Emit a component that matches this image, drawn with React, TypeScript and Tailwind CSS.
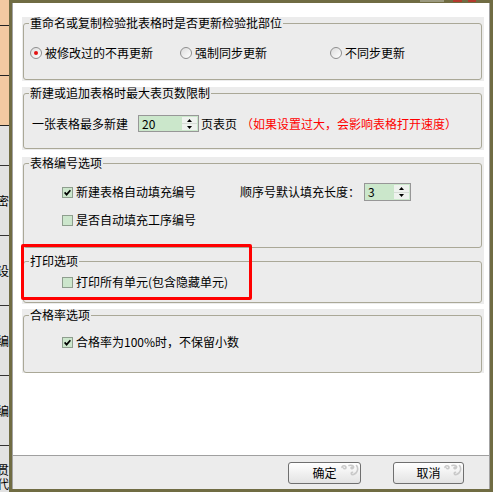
import React from 'react';

const Radio = ({ checked }: { checked?: boolean }) => (
  <span className="w-[12px] h-[12px] rounded-full border border-[#8e8e8e] bg-linear-to-br from-[#dcdcdc] to-white flex items-center justify-center shrink-0">
    {checked && <span className="w-[4px] h-[4px] rounded-full bg-[#e31212]" />}
  </span>
);

const Check = ({ checked }: { checked?: boolean }) => (
  <span className="w-[11px] h-[11px] border border-[#8e9e8e] bg-[#cce6cc] flex items-center justify-center shrink-0">
    {checked && (
      <svg width="7" height="7" viewBox="0 0 7 7">
        <path d="M0.6 3.4 L2.6 5.6 L6.4 1.2" stroke="#000" strokeWidth="1.7" fill="none" />
      </svg>
    )}
  </span>
);

const Spin = ({ value, size }: { value: string; size: string }) => (
  <div className={`flex border border-[#979797] bg-[#cbe7cb] ${size}`}>
    <span className="flex-1 pl-[3px] leading-[15px]">{value}</span>
    <div className="w-[15px] my-px mr-px flex flex-col bg-[#eef2ee]">
      <div className="flex-1 flex items-center justify-center border-b border-[#d6dcd6]">
        <svg width="5" height="3" viewBox="0 0 5 3"><path d="M2.5 0 L5 3 L0 3 Z" fill="#000" /></svg>
      </div>
      <div className="flex-1 flex items-center justify-center">
        <svg width="5" height="3" viewBox="0 0 5 3"><path d="M0 0 L5 0 L2.5 3 Z" fill="#000" /></svg>
      </div>
    </div>
  </div>
);

const Group = ({ title, panel, box, children }: { title: string; panel: string; box: string; children: React.ReactNode }) => (
  <div className={`ml-[9px] mr-[5px] bg-[#ececec] ${panel}`}>
    <fieldset className={`ml-px mr-[2px] border border-[#aaa897] rounded-[3px] ${box}`}>
      <legend className="ml-[5px] px-px leading-[12px]">{title}</legend>
      {children}
    </fieldset>
  </div>
);

// the little grey curl painted on the buttons
const Swirl = () => (
  <svg className="absolute right-[1px] top-[1px]" width="19" height="12" viewBox="0 0 19 12" fill="none" stroke="#c9c9c9" strokeWidth="1.6" strokeLinecap="round">
    <path d="M2 3.5 C2 1.2 6 1.2 6 3.5 C6 5 4 5.2 3.6 4" />
    <path d="M9 1.5 C13 0.5 15 3 12.5 4.5 C11 5.2 10.5 3.5 11.8 3.2" />
    <path d="M16.5 1.5 C18.5 4 18 9 13.5 10.5 C11 11 10.5 8.5 12.5 8.2" />
  </svg>
);

const Btn = ({ label, w }: { label: string; w: string }) => (
  <div className={`relative ${w} h-[22px] rounded-[3px] border border-[#6f6f6f] bg-linear-to-b from-white to-[#e3e3e3] flex items-center justify-center`}>
    <Swirl />
    <span className="relative">{label}</span>
  </div>
);

export default function App() {
  return (
    <div className="relative w-[493px] h-[492px] flex overflow-hidden text-[12px] text-black font-['Noto_Sans_CJK_SC','Liberation_Sans',sans-serif]">
      {/* strip of the window behind */}
      <div className="w-[9px] flex flex-col overflow-hidden">
        <div className="h-[26px] bg-[#f2c9a1] border-b border-[#222]" />
        <div className="h-[50px] bg-[#f2c9a1] border-b border-[#222]" />
        <div className="h-[50px] bg-[#f2c9a1] border-b border-[#222]" />
        <div className="h-[40px] bg-[#e2e2e2] border-b border-[#333]" />
        <div className="h-[70px] bg-[#e2e2e2] border-b border-[#333] flex items-center"><span className="-ml-[3px]">密</span></div>
        <div className="h-[70px] bg-[#e2e2e2] border-b border-[#333] flex items-center"><span className="-ml-[3px]">设</span></div>
        <div className="h-[70px] bg-[#e2e2e2] border-b border-[#333] flex items-center"><span className="-ml-[3px]">编</span></div>
        <div className="h-[70px] bg-[#e2e2e2] border-b border-[#333] flex items-center"><span className="-ml-[3px]">编</span></div>
        <div className="flex-1 bg-[#e2e2e2] flex flex-col pt-[17px] leading-[14px]">
          <span className="-ml-[3px]">贯</span>
          <span className="-ml-[3px]">代</span>
        </div>
      </div>

      {/* dialog */}
      <div className="flex-1 flex border-[3px] border-[#706c43]">
        <div className="flex-1 flex flex-col border-l border-r border-[#a3a3a3]">
          <div className="flex-1 bg-white pt-[14px]">
            <Group title="重命名或复制检验批表格时是否更新检验批部位" panel="h-[64px]" box="h-[63px]">
              <div className="mt-[16px] h-[16px] flex items-center pl-[6px]">
                <div className="w-[150px] flex items-center"><Radio checked /><span className="ml-[3px]">被修改过的不再更新</span></div>
                <div className="w-[150px] flex items-center"><Radio /><span className="ml-[3px]">强制同步更新</span></div>
                <div className="flex items-center"><Radio /><span className="ml-[3px]">不同步更新</span></div>
              </div>
            </Group>

            <Group title="新建或追加表格时最大表页数限制" panel="mt-[6px] h-[63px]" box="h-[62px]">
              <div className="mt-[16px] h-[17px] flex items-center pl-[8px]">
                <span>一张表格最多新建</span>
                <div className="ml-[10px]"><Spin value="20" size="w-[61px] h-[17px]" /></div>
                <span className="ml-[2px]">页表页</span>
                <span className="ml-[4px] text-[#ff0000]">（如果设置过大，会影响表格打开速度）</span>
              </div>
            </Group>

            <Group title="表格编号选项" panel="mt-[7px] h-[92px]" box="h-[91px]">
              <div className="mt-[14px] h-[18px] flex items-center pl-[38px]">
                <div className="w-[178px] flex items-center"><Check checked /><span className="ml-[3px]">新建表格自动填充编号</span></div>
                <span>顺序号默认填充长度：</span>
                <div className="ml-[4px]"><Spin value="3" size="w-[47px] h-[18px]" /></div>
              </div>
              <div className="mt-[10px] h-[18px] flex items-center pl-[38px]">
                <Check /><span className="ml-[3px]">是否自动填充工序编号</span>
              </div>
            </Group>

            <Group title="打印选项" panel="h-[55px] pt-[6px]" box="h-[48px]">
              <div className="mt-[7px] h-[16px] flex items-center pl-[38px]">
                <Check /><span className="ml-[3px]">打印所有单元(包含隐藏单元)</span>
              </div>
            </Group>

            <Group title="合格率选项" panel="mt-[5px] h-[64px]" box="h-[64px]">
              <div className="mt-[13px] h-[16px] flex items-center pl-[38px]">
                <Check checked /><span className="ml-[3px]">合格率为100%时，不保留小数</span>
              </div>
            </Group>
          </div>

          <div className="h-[34px] border-t border-[#a0a0a0] bg-[#ececec] flex justify-end gap-[32px] pt-[6px] pr-[25px]">
            <Btn label="确定" w="w-[73px]" />
            <Btn label="取消" w="w-[71px]" />
          </div>
        </div>
      </div>

      {/* bits of the title bar buttons above */}
      <div className="absolute top-0 left-[420px] w-[24px] h-[2px] bg-[#9c9a80]" />
      <div className="absolute top-0 left-[453px] w-[9px] h-[2px] bg-[#b33a2e]" />
      <div className="absolute top-0 left-[468px] w-[8px] h-[2px] bg-[#b33a2e]" />

      {/* red highlight drawn over the screenshot */}
      <div className="absolute left-[21px] top-[244px] w-[231px] h-[56px] border-[3px] border-[#ff0000] rounded-[2px]" />
    </div>
  );
}
